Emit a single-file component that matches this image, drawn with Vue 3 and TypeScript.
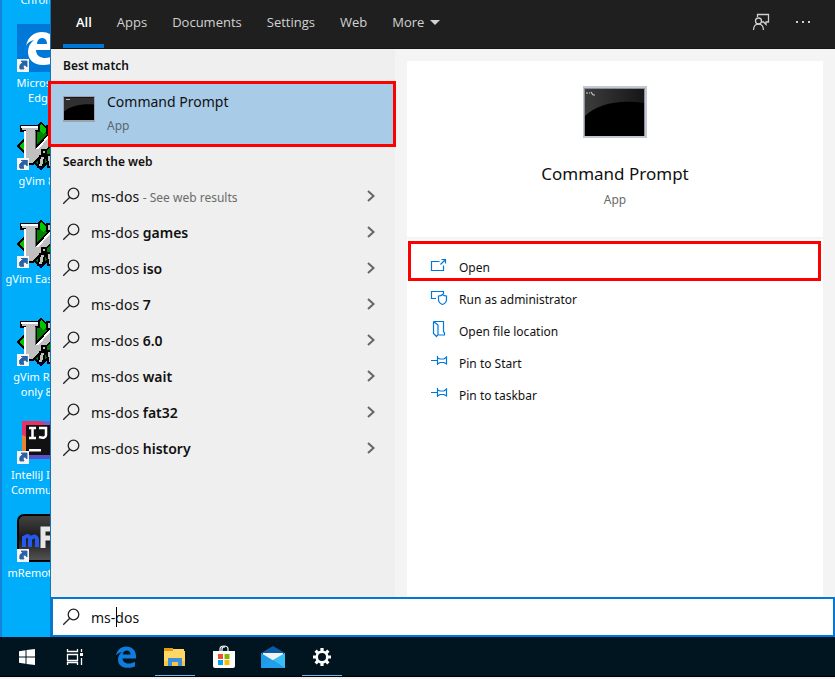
<script setup lang="ts">
import { ref } from 'vue'

interface Shortcut {
  icon: 'edge' | 'vim' | 'idea' | 'remote'
  lines: string[]
}

interface Action {
  icon: 'open' | 'admin' | 'folder' | 'pin'
  label: string
}

const query = ref('ms-dos')
const activeTab = ref('All')
const tabs = ['All', 'Apps', 'Documents', 'Settings', 'Web']

const shortcuts: Shortcut[] = [
  { icon: 'edge', lines: ['Microsoft', 'Edge'] },
  { icon: 'vim', lines: ['gVim 8.2'] },
  { icon: 'vim', lines: ['gVim Easy 8.2'] },
  { icon: 'vim', lines: ['gVim Read', 'only 8.2'] },
  { icon: 'idea', lines: ['IntelliJ IDEA', 'Community'] },
  { icon: 'remote', lines: ['mRemoteNG'] },
]

const suggestions = ['', 'games', 'iso', '7', '6.0', 'wait', 'fat32', 'history']

const actions: Action[] = [
  { icon: 'open', label: 'Open' },
  { icon: 'admin', label: 'Run as administrator' },
  { icon: 'folder', label: 'Open file location' },
  { icon: 'pin', label: 'Pin to Start' },
  { icon: 'pin', label: 'Pin to taskbar' },
]
</script>

<template>
  <div class="screen">
    <div class="workspace">
      <aside class="desktop">
        <ul class="shortcuts">
          <li class="shortcut first"><span>Chrome</span></li>
          <li v-for="(s, i) in shortcuts" :key="i" class="shortcut">
            <svg v-if="s.icon === 'edge'" class="shortcut-icon" viewBox="0 0 48 48" aria-hidden="true">
              <rect width="48" height="48" fill="#0078d7" />
              <path d="M9 22C11 12 18 8 25 8c9 0 14 7 14 14v4H19c0 6 5 8 9 8 4 0 7-1 10-3v7c-3 2-7 3-12 3-10 0-15-6-15-13 0-5 2-9 6-12-4 1-7 3-8 6zm11-2h10c0-4-2-6-5-6s-5 3-5 6z" fill="#fff" />
              <rect y="35" width="12" height="13" fill="#f4f4f4" />
              <path d="M3 45c-1-4 1-6 3-6l-2-2h6v6l-2-2c-2 0-2 2-1 4z" fill="#2a62a6" stroke="#2a62a6" stroke-width=".8" />
            </svg>
            <svg v-else-if="s.icon === 'vim'" class="shortcut-icon" viewBox="0 0 48 48" shape-rendering="crispEdges" aria-hidden="true">
              <path d="M24 1L47 24 24 47 1 24z" fill="#007f00" stroke="#000" stroke-width="1.500" />
              <path d="M24 2l7 7-5 3-6-6zM2 24l5-5v9z" fill="#00c800" />
              <path d="M4 4h18v5h-3v16L33 11h-3V4h17v6L20 38l-4 4H8V9H4z" fill="#c0c0c0" stroke="#000" stroke-width="1.500" />
              <path d="M4 5h17M8 9v28M20 27l14-15" fill="none" stroke="#fff" stroke-width="2" />
              <path d="M18 9v18" fill="none" stroke="#666" stroke-width="1" />
              <path d="M25 28h4v4h-4zM23 34h5l-2 11h-5zM30 33h5v12h-4zM34 33h8v12h-3V37h-3z" fill="#c0c0c0" stroke="#000" stroke-width="2" />
              <rect x="22" y="45" width="3" height="2" fill="#000080" />
              <rect y="36" width="12" height="12" fill="#f4f4f4" />
              <path d="M3 46c-1-4 1-6 3-6l-2-2h6v6l-2-2c-2 0-2 2-1 4z" fill="#2a62a6" stroke="#2a62a6" stroke-width=".8" />
            </svg>
            <svg v-else-if="s.icon === 'idea'" class="shortcut-icon" viewBox="0 0 48 48" aria-hidden="true">
              <path d="M5 5h38v38H5z" fill="#e83268" />
              <path d="M5 19l5 2v20H5z" fill="#e68332" />
              <path d="M24 5h19v18L28 9z" fill="#765cd5" />
              <path d="M10 38h33v5H8z" fill="#5a51c8" />
              <rect x="9" y="9" width="30" height="30" fill="#111" />
              <path d="M12 12h7M12 22h7M15.500 12v10M22 12h7v7q0 4-7 2" fill="none" stroke="#fff" stroke-width="2.500" />
              <rect x="12" y="33" width="12" height="2.500" fill="#fff" />
              <rect y="35" width="12" height="13" fill="#f4f4f4" />
              <path d="M3 45c-1-4 1-6 3-6l-2-2h6v6l-2-2c-2 0-2 2-1 4z" fill="#2a62a6" stroke="#2a62a6" stroke-width=".8" />
            </svg>
            <svg v-else class="shortcut-icon" viewBox="0 0 48 48" aria-hidden="true">
              <defs>
                <linearGradient id="remoteBack" x1="0" y1="0" x2="0" y2="1">
                  <stop offset="0" stop-color="#444" />
                  <stop offset=".5" stop-color="#1a1a1a" />
                  <stop offset="1" stop-color="#555" />
                </linearGradient>
              </defs>
              <rect x="1" y="1" width="46" height="46" rx="6" fill="url(#remoteBack)" stroke="#050505" stroke-width="2" />
              <path d="M7 33V22M7 24q4-4 6 0v9M13 25q5-5 7 0v8" fill="none" stroke="#2558ee" stroke-width="4" />
              <path d="M26 34V15h10M26 24h9" fill="none" stroke="#e7e7e7" stroke-width="5" />
              <rect y="35" width="12" height="13" fill="#f4f4f4" />
              <path d="M3 45c-1-4 1-6 3-6l-2-2h6v6l-2-2c-2 0-2 2-1 4z" fill="#2a62a6" stroke="#2a62a6" stroke-width=".8" />
            </svg>
            <span v-for="line in s.lines" :key="line">{{ line }}</span>
          </li>
        </ul>
      </aside>

      <main class="panel">
        <header class="topbar">
          <nav class="tabs">
            <button
              v-for="tab in tabs"
              :key="tab"
              type="button"
              class="tab"
              :class="{ active: tab === activeTab }"
              @click="activeTab = tab"
            >{{ tab }}</button>
            <button type="button" class="tab more">
              More
              <svg width="10" height="5" viewBox="0 0 10 5" aria-hidden="true"><path d="M0 0h10L5 5z" fill="currentColor" /></svg>
            </button>
          </nav>
          <div class="tools">
            <button type="button" class="tool" aria-label="Feedback">
              <svg width="18" height="18" viewBox="0 0 18 18" fill="none" stroke="#d0d0d0" stroke-width="1.300" aria-hidden="true">
                <path d="M5.500 4V1.500h11v7.500H14v2.500L11.500 9H10" />
                <circle cx="6.500" cy="8" r="3" />
                <path d="M1.500 17c0-3.500 2-6 5-6s5 2.500 5 6" />
              </svg>
            </button>
            <button type="button" class="tool" aria-label="Options">
              <svg width="18" height="18" viewBox="0 0 18 18" fill="#d0d0d0" aria-hidden="true">
                <rect x="2" y="8" width="2" height="2" /><rect x="8" y="8" width="2" height="2" /><rect x="14" y="8" width="2" height="2" />
              </svg>
            </button>
          </div>
        </header>

        <div class="content">
          <section class="results">
            <h2 class="heading">Best match</h2>
            <button type="button" class="best">
              <svg class="best-icon" width="32" height="26" viewBox="0 0 64 52" aria-hidden="true">
                <rect width="64" height="52" fill="#9ba3af" />
                <rect x="2" y="2" width="60" height="46" fill="#000" />
                <path d="M2 3h60v14C38 15 16 20 2 31z" fill="#303030" />
                <path d="M6 7h8" stroke="#bbb" stroke-width="2" />
              </svg>
              <span class="best-text">
                <span class="best-name">Command Prompt</span>
                <span class="best-kind">App</span>
              </span>
              <span class="mark mark-best"></span>
            </button>

            <h2 class="heading">Search the web</h2>
            <ul class="list">
              <li v-for="word in suggestions" :key="word">
                <button type="button" class="suggestion">
                  <svg class="lens" width="18" height="18" viewBox="0 0 18 18" fill="none" stroke="#222" stroke-width="1.300" aria-hidden="true">
                    <circle cx="10.500" cy="6.500" r="5.300" /><path d="M6.800 10.300L.2 16.800" />
                  </svg>
                  <span class="term">ms-dos <b v-if="word">{{ word }}</b><small v-else>- See web results</small></span>
                  <svg class="chevron" width="8" height="12" viewBox="0 0 8 12" fill="none" stroke="#666" stroke-width="2" aria-hidden="true">
                    <path d="M1 1l5.500 5L1 11" />
                  </svg>
                </button>
              </li>
            </ul>
          </section>

          <section class="detail">
            <div class="summary">
              <svg width="64" height="52" viewBox="0 0 64 52" aria-hidden="true">
                <defs>
                  <linearGradient id="gloss" x1="0" y1="0" x2="1" y2="0">
                    <stop offset="0" stop-color="#3c3c3c" />
                    <stop offset="1" stop-color="#161616" />
                  </linearGradient>
                </defs>
                <rect width="64" height="52" fill="#c3c8d2" />
                <rect x="1" y="2" width="61" height="48" fill="#8b909b" />
                <rect x="2" y="3" width="59" height="47" fill="#000" />
                <path d="M2 3h59v14C36 13 14 18 2 30z" fill="url(#gloss)" />
                <path d="M3 7h2m1 0h1m1-1l2 3m0 0h2" fill="none" stroke="#ccc" stroke-width="1.200" />
              </svg>
              <h1 class="title">Command Prompt</h1>
              <p class="kind">App</p>
            </div>
            <ul class="actions">
              <li v-for="a in actions" :key="a.label">
                <button type="button" class="action">
                  <svg width="20" height="20" viewBox="0 0 20 20" fill="none" stroke="#0078d7" stroke-width="1.200" aria-hidden="true">
                    <path v-if="a.icon === 'open'" d="M9.500 6.500h-8v9h12v-5M10.500 9.500l5-5M11.500 4.500h4v4" />
                    <path v-else-if="a.icon === 'admin'" d="M13.500 7V4.500h-12v7H6M12.500 7.500Q11 9 8.500 9v3.500q0 3.500 4 5 4-1.500 4-5V9q-2.500 0-4-1.500z" />
                    <path v-else-if="a.icon === 'folder'" d="M3.500 2.500h10v10l1 1.500v2h-6M3.500 2.500v12l3 3 1.500-2V6L3.500 2.500" />
                    <path v-else d="M1 9.500h6M7.500 5v9M7.500 7l2.500 1h4l2.500-2v7L14 11.500h-4L7.500 13" />
                  </svg>
                  <span>{{ a.label }}</span>
                </button>
              </li>
              <li class="mark mark-open" aria-hidden="true"></li>
            </ul>
          </section>
        </div>

        <label class="search">
          <svg class="lens" width="18" height="18" viewBox="0 0 18 18" fill="none" stroke="#222" stroke-width="1.300" aria-hidden="true">
            <circle cx="10.500" cy="6.500" r="5.300" /><path d="M6.800 10.300L.2 16.800" />
          </svg>
          <input v-model="query" class="query" type="text" aria-label="Search" />
          <span class="caret"></span>
        </label>
      </main>
    </div>

    <footer class="taskbar">
      <button type="button" class="task" aria-label="Start">
        <svg width="24" height="24" viewBox="0 0 24 24" fill="#fff" aria-hidden="true">
          <path d="M4 6.200l6.500-1V11.500H4zM11.500 5L20 4v7.500h-8.500zM4 12.500h6.500v6.300L4 17.800zM11.500 12.500H20V20l-8.500-1z" />
        </svg>
      </button>
      <button type="button" class="task" aria-label="Task view">
        <svg width="24" height="24" viewBox="0 0 24 24" fill="none" stroke="#fff" stroke-width="1.300" aria-hidden="true">
          <path d="M4.500 4v2.500h10V4M4.500 9.500h10v6h-10zM4.500 20v-2.500h10V20M18.500 4v3M18.500 13v7" />
          <rect x="17" y="8" width="3" height="3" fill="#fff" stroke="none" />
        </svg>
      </button>
      <span class="apps">
        <button type="button" class="task" aria-label="Edge">
          <svg width="24" height="24" viewBox="0 0 24 24" fill="#0f7ddd" aria-hidden="true">
            <path d="M2 10.500C3 5 7 1.500 12 1.500c6 0 10 4 10 9.500v2.500H8.500c.2 3.500 3 5 6 5 2.500 0 4.500-.6 6.500-1.800v4.500c-2 1-4.500 1.600-7.500 1.600-6 0-9.500-3.300-9.500-8.300 0-3.300 1.700-6 4.500-7.500C5.500 7.500 3.500 8.500 2 10.500zm6.700-1h7.800c0-2.500-1.300-4-3.700-4-2.200 0-3.700 1.500-4.100 4z" />
          </svg>
        </button>
        <button type="button" class="task open" aria-label="File Explorer">
          <svg width="24" height="24" viewBox="0 0 24 24" aria-hidden="true">
            <path d="M1 3h9v3H1z" fill="#e39b11" />
            <path d="M10 4h11v3H10zM1 6h21v15H1z" fill="#ffd767" />
            <path d="M1 16h21v5H1z" fill="#f6c64b" />
            <path d="M5 21v-8h14v8h-4v-4H9v4z" fill="#3f8fd9" />
          </svg>
        </button>
        <button type="button" class="task" aria-label="Store">
          <svg width="24" height="24" viewBox="0 0 24 24" aria-hidden="true">
            <path d="M8 7V4q0-3 4-3t4 3v3M10 7V4q0-2 3-2" fill="none" stroke="#fff" stroke-width="1.200" />
            <path d="M1 6h22v15q0 2-2 2H3q-2 0-2-2z" fill="#fff" />
            <path d="M6 9h5v5H6z" fill="#f25022" /><path d="M12.500 9h5v5h-5z" fill="#7fba00" />
            <path d="M6 15h5v5H6z" fill="#00a4ef" /><path d="M12.500 15h5v5h-5z" fill="#ffb900" />
          </svg>
        </button>
        <button type="button" class="task" aria-label="Mail">
          <svg width="24" height="24" viewBox="0 0 24 24" aria-hidden="true">
            <path d="M0 8l12-7 12 7v4H0z" fill="#0c59a4" />
            <path d="M2 8h20v8H2z" fill="#f2f2f2" />
            <path d="M0 8l13 8-13 7z" fill="#1f9ce8" />
            <path d="M24 8v15H0l12-8z" fill="#38bdf5" />
            <path d="M12 15l12 8H0z" fill="#229fe9" />
          </svg>
        </button>
        <button type="button" class="task open" aria-label="Settings">
          <svg width="24" height="24" viewBox="0 0 24 24" fill="none" stroke="#fff" aria-hidden="true">
            <circle cx="12" cy="12" r="5.300" stroke-width="2.600" />
            <path d="M12 3v3M12 18v3M3 12h3M18 12h3M5.600 5.600l2.200 2.200M16.200 16.200l2.200 2.200M18.400 5.600l-2.200 2.200M7.800 16.200l-2.200 2.200" stroke-width="3.200" />
          </svg>
        </button>
      </span>
    </footer>
  </div>
</template>

<style>
body {
  margin: 0;
}
</style>

<style scoped>
.screen {
  display: flex;
  flex-direction: column;
  min-height: 100vh;
  box-sizing: border-box;
  border-bottom: 2px solid #f4f4f4;
  font-family: "Noto Sans", "Open Sans", sans-serif;
  font-size: 12px;
  color: #111;
}
.screen * {
  box-sizing: border-box;
}
button {
  margin: 0;
  padding: 0;
  border: 0;
  background: none;
  font: inherit;
  color: inherit;
  text-align: left;
}
ul {
  margin: 0;
  padding: 0;
  list-style: none;
}
svg {
  display: block;
  flex: none;
}
.workspace {
  display: flex;
  flex: 1;
}
.desktop {
  flex: none;
  width: 51px;
  overflow: hidden;
  border-left: 2px solid #1583d8;
  border-right: 1px solid #1873b8;
  background: #00adfb;
}
.shortcuts {
  width: 78px;
}
.shortcut {
  display: flex;
  flex-direction: column;
  align-items: center;
  height: 98px;
  font-size: 11px;
  line-height: 15px;
  color: #fff;
  white-space: nowrap;
}
.shortcut.first {
  height: 32px;
  margin-top: -8px;
}
.shortcut-icon {
  width: 48px;
  height: 48px;
  margin-bottom: 3px;
}
.panel {
  position: relative;
  display: flex;
  flex: 1;
  flex-direction: column;
  min-width: 0;
}
.topbar {
  display: flex;
  justify-content: space-between;
  height: 49px;
  background: #1f1f1f;
  border-bottom: 1px solid #171414;
  color: #d2d2d2;
}
.tabs {
  display: flex;
  padding-left: 12px;
  font-family: "Open Sans", "Noto Sans", sans-serif;
  font-size: 13px;
}
.tab {
  display: flex;
  align-items: center;
  gap: 6px;
  padding: 0 12px 0 13px;
  border-bottom: 4px solid transparent;
}
.tab.active {
  border-bottom-color: #0078d7;
  color: #fff;
  font-weight: 600;
}
.tools {
  display: flex;
  align-items: center;
  gap: 24px;
  padding: 0 23px 4px 0;
}
.content {
  display: flex;
  flex: 1;
  background: #f4f4f4;
}
.results {
  flex: none;
  width: 344px;
  padding-top: 1px;
  background: #efefef;
}
.heading {
  height: 32px;
  margin: 0;
  padding-left: 12px;
  font-size: 12px;
  font-weight: 600;
  line-height: 32px;
}
.best {
  position: relative;
  display: flex;
  gap: 12px;
  width: 100%;
  padding: 8px 12px;
  background: #a8cbe8;
}
.best-icon {
  margin-top: 6px;
}
.best-text {
  display: flex;
  flex-direction: column;
  line-height: 24px;
}
.best-name {
  font-size: 14px;
}
.best-kind {
  color: #5a6670;
}
.mark {
  position: absolute;
  border: 3px solid #fe0000;
  pointer-events: none;
}
.mark-best {
  top: -1px;
  right: -1px;
  bottom: -1px;
  left: -3px;
}
.suggestion {
  display: flex;
  align-items: center;
  width: 100%;
  height: 36px;
  padding: 0 20px 0 12px;
}
.term {
  flex: 1;
  padding-left: 10px;
  font-size: 14px;
}
.term b {
  font-weight: 600;
}
.term small {
  font-size: 12px;
  color: #6b6b6b;
}
.detail {
  display: flex;
  flex: 1;
  flex-direction: column;
  gap: 2px;
  min-width: 0;
  padding: 12px 12px 0;
}
.summary {
  display: flex;
  flex-direction: column;
  align-items: center;
  padding: 25px 0 24px;
  background: #fff;
}
.title {
  margin: 23px 0 0;
  font-size: 17px;
  font-weight: 400;
  line-height: 26px;
}
.kind {
  margin: 0;
  line-height: 26px;
  color: #6b6b6b;
}
.actions {
  position: relative;
  flex: 1;
  padding-top: 12px;
  background: #fff;
}
.action {
  display: flex;
  gap: 9px;
  width: 100%;
  height: 32px;
  padding: 4px 23px 2px;
  line-height: 26px;
}
.mark-open {
  top: 2px;
  right: 2px;
  left: 1px;
  height: 40px;
}
.search {
  position: relative;
  display: flex;
  align-items: center;
  height: 40px;
  padding: 0 10px;
  border: 2px solid #0078d7;
  background: #fff;
}
.query {
  flex: 1;
  min-width: 0;
  margin-left: 10px;
  padding: 0;
  border: 0;
  outline: 0;
  background: none;
  font: inherit;
  font-size: 14px;
  color: inherit;
}
.caret {
  position: absolute;
  top: 8px;
  left: 63px;
  width: 1px;
  height: 20px;
  background: #000;
}
.taskbar {
  display: flex;
  height: 40px;
  padding-left: 3px;
  border-bottom: 1px solid #000;
  background: #00151f;
}
.apps {
  display: flex;
  gap: 1px;
  padding-left: 3px;
}
.task {
  position: relative;
  display: flex;
  align-items: center;
  justify-content: center;
  width: 48px;
}
.task.open::after {
  content: "";
  position: absolute;
  right: 4px;
  bottom: 0;
  left: 4px;
  height: 1px;
  background: #76b9ed;
}
</style>
